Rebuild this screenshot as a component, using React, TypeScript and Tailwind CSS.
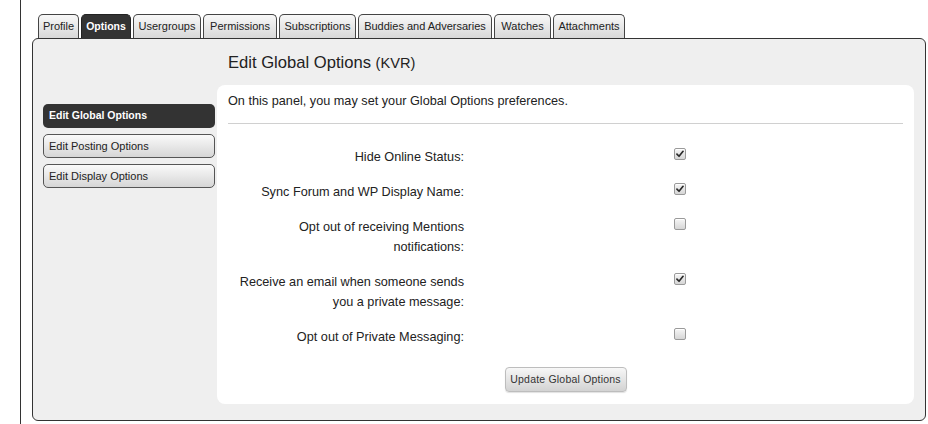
import React from "react";

const tabs = [
  { label: "Profile", w: "w-[41px]" },
  { label: "Options", w: "w-[50px]", active: true },
  { label: "Usergroups", w: "w-[68px]" },
  { label: "Permissions", w: "w-[74px]" },
  { label: "Subscriptions", w: "w-[77px]" },
  { label: "Buddies and Adversaries", w: "w-[134px]" },
  { label: "Watches", w: "w-[57px]" },
  { label: "Attachments", w: "w-[72px]" },
];

const navItems = [
  { label: "Edit Global Options", active: true },
  { label: "Edit Posting Options" },
  { label: "Edit Display Options" },
];

const rows: { lines: string[]; checked: boolean }[] = [
  { lines: ["Hide Online Status:"], checked: true },
  { lines: ["Sync Forum and WP Display Name:"], checked: true },
  { lines: ["Opt out of receiving Mentions", "notifications:"], checked: false },
  { lines: ["Receive an email when someone sends", "you a private message:"], checked: true },
  { lines: ["Opt out of Private Messaging:"], checked: false },
];

function Checkbox({ checked }: { checked: boolean }) {
  return (
    <span className="relative block w-[12px] h-[12px] rounded-[2px] border border-[#9a9a9a] bg-gradient-to-b from-[#f6f6f6] to-[#d6d6d6] shadow-[inset_0_1px_0_#ffffff]">
      {checked && (
        <svg viewBox="0 0 10 10" className="absolute left-[1px] top-[1px] w-[8px] h-[8px]">
          <path d="M1.2 5.2 L3.8 7.8 L8.8 1.6" fill="none" stroke="#2a2a2a" strokeWidth="2.1" strokeLinecap="round" strokeLinejoin="round" />
        </svg>
      )}
    </span>
  );
}

export default function App() {
  return (
    <div
      className="w-[928px] h-[424px] overflow-hidden bg-white text-[#222]"
      style={{ fontFamily: '"Liberation Sans", Arial, sans-serif' }}
    >
      <div className="ml-[20px] h-[424px] border-l border-[#333] pl-[11px] pt-[14px]">
        {/* Tabs */}
        <div className="flex gap-[2px] pl-[6px] h-[24px]">
          {tabs.map((t) =>
            t.active ? (
              <div
                key={t.label}
                className={`${t.w} h-[24px] flex items-center justify-center rounded-t-[5px] border border-b-0 border-[#222] bg-[#333] text-white font-bold text-[10.5px]`}
              >
                {t.label}
              </div>
            ) : (
              <div
                key={t.label}
                className={`${t.w} h-[24px] flex items-center justify-center rounded-t-[5px] border border-b-0 border-[#444] bg-gradient-to-b from-[#f8f8f8] to-[#d8d8d8] text-[#222] text-[11px]`}
              >
                {t.label}
              </div>
            )
          )}
        </div>

        {/* Panel */}
        <div className="w-[894px] h-[383px] rounded-[6px] border border-[#333] bg-[#efefef] flex">
          {/* Left nav */}
          <div className="pl-[10px] pt-[65px] w-[184px] flex flex-col gap-[6px]">
            {navItems.map((n) =>
              n.active ? (
                <div
                  key={n.label}
                  className="w-[172px] h-[24px] rounded-[5px] bg-[#333] text-white font-bold text-[10.5px] flex items-center pl-[6px]"
                >
                  {n.label}
                </div>
              ) : (
                <div
                  key={n.label}
                  className="w-[172px] h-[24px] rounded-[5px] border border-[#555] bg-gradient-to-b from-[#fafafa] to-[#d6d6d6] text-[#222] text-[11px] flex items-center pl-[5px]"
                >
                  {n.label}
                </div>
              )
            )}
          </div>

          {/* Right column */}
          <div className="w-[697px]">
            <div className="h-[46px] flex items-center pl-[11px] pt-[2px]">
              <span className="text-[16.6px] text-[#222]">
                Edit Global Options <span className="text-[14.6px]">(KVR)</span>
              </span>
            </div>
            <div className="h-[319px] rounded-[8px] bg-white px-[11px] pt-[8px]">
              <p className="text-[12.7px] leading-[16px] text-[#222]">
                On this panel, you may set your Global Options preferences.
              </p>
              <div className="mt-[14px] h-px bg-[#d0d0d0]" />
              <div className="mt-[23px] flex flex-col gap-[15px]">
                {rows.map((r, i) => (
                  <div key={i} className="flex">
                    <div className="w-[236px] text-right text-[12.7px] leading-[20px] text-[#222]">
                      {r.lines.map((l, j) => (
                        <div key={j}>{l}</div>
                      ))}
                    </div>
                    <div className="ml-[210px] pt-[1px]">
                      <Checkbox checked={r.checked} />
                    </div>
                  </div>
                ))}
              </div>
              <div className="mt-[20px] flex justify-center">
                <button className="w-[122px] h-[25px] rounded-[4px] border border-[#bdbdbd] bg-gradient-to-b from-[#f7f7f7] to-[#d3d3d3] text-[10.5px] text-[#333] tracking-[0.2px] shadow-[0_1px_1px_rgba(0,0,0,0.12)]">
                  Update Global Options
                </button>
              </div>
            </div>
          </div>
        </div>
      </div>
    </div>
  );
}
